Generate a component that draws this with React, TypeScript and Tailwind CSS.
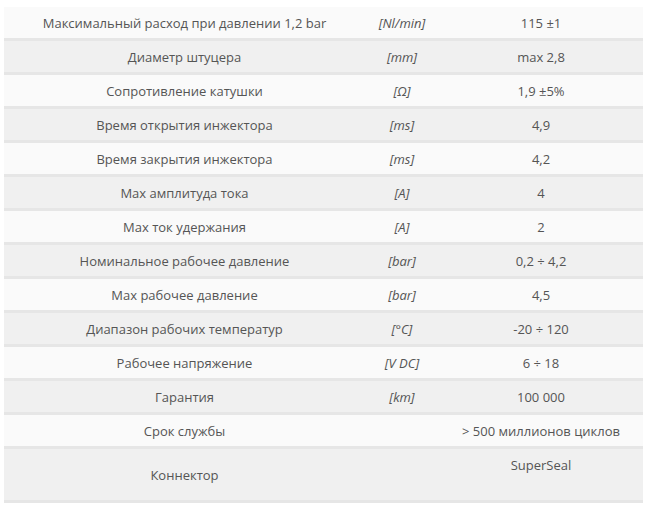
const specs: { name: string; unit: string; value: string }[] = [
  { name: 'Максимальный расход при давлении 1,2 bar', unit: '[Nl/min]', value: '115 ±1' },
  { name: 'Диаметр штуцера', unit: '[mm]', value: 'max 2,8' },
  { name: 'Сопротивление катушки', unit: '[Ω]', value: '1,9 ±5%' },
  { name: 'Время открытия инжектора', unit: '[ms]', value: '4,9' },
  { name: 'Время закрытия инжектора', unit: '[ms]', value: '4,2' },
  { name: 'Max амплитуда тока', unit: '[A]', value: '4' },
  { name: 'Max ток удержания', unit: '[A]', value: '2' },
  { name: 'Номинальное рабочее давление', unit: '[bar]', value: '0,2 ÷ 4,2' },
  { name: 'Max рабочее давление', unit: '[bar]', value: '4,5' },
  { name: 'Диапазон рабочих температур', unit: '[°C]', value: '-20 ÷ 120' },
  { name: 'Рабочее напряжение', unit: '[V DC]', value: '6 ÷ 18' },
  { name: 'Гарантия', unit: '[km]', value: '100 000' },
  { name: 'Срок службы', unit: '', value: '> 500 миллионов циклов' },
];

export default function App() {
  return (
    <div className="min-h-screen bg-white px-1 pt-[7px] font-['Open_Sans',sans-serif] text-[13px] leading-[19px] text-[#555]">
      <table className="w-[639px] border-collapse table-fixed">
        <colgroup>
          <col className="w-[361px]" />
          <col className="w-[74px]" />
          <col className="w-[204px]" />
        </colgroup>
        <tbody>
          {specs.map((s, i) => (
            <tr key={s.name} className={i % 2 === 0 ? 'bg-[#fafafa]' : 'bg-[#f0f0f0]'}>
              <td className="border-b-[3px] border-[#e6e6e6] pt-[7px] pb-[5px] text-center align-middle">{s.name}</td>
              <td className="border-b-[3px] border-[#e6e6e6] pt-[7px] pb-[5px] text-center align-middle italic">{s.unit}</td>
              <td className="border-b-[3px] border-[#e6e6e6] pt-[7px] pb-[5px] text-center align-middle">{s.value}</td>
            </tr>
          ))}
          {/* last row: value sits in a paragraph with bottom margin */}
          <tr className="bg-[#f0f0f0]">
            <td className="border-b-[3px] border-[#e6e6e6] pt-[7px] pb-[5px] text-center align-middle">Коннектор</td>
            <td className="border-b-[3px] border-[#e6e6e6] pt-[7px] pb-[5px] text-center align-middle italic"></td>
            <td className="border-b-[3px] border-[#e6e6e6] pt-[7px] pb-[5px] text-center align-middle">
              <p className="mb-5">SuperSeal</p>
            </td>
          </tr>
        </tbody>
      </table>
    </div>
  );
}
